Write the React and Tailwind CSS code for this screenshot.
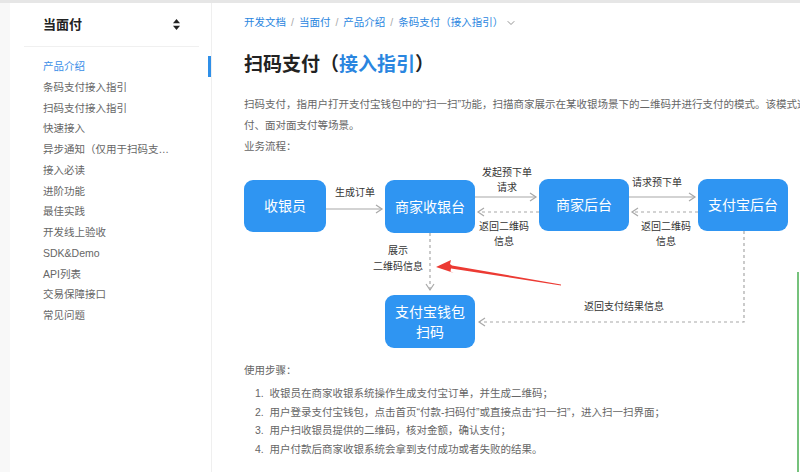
import React from "react";
import { ChevronDown } from "lucide-react";

const FONT = { fontFamily: '"Liberation Sans", "Noto Sans CJK SC", sans-serif' };

const navItems = [
  "产品介绍",
  "条码支付接入指引",
  "扫码支付接入指引",
  "快速接入",
  "异步通知（仅用于扫码支…",
  "接入必读",
  "进阶功能",
  "最佳实践",
  "开发线上验收",
  "SDK&Demo",
  "API列表",
  "交易保障接口",
  "常见问题",
];

function Box({ className, children }) {
  return (
    <div
      className={
        "absolute flex items-center justify-center rounded-[9px] bg-[#2f95f2] text-center text-[14px] leading-[20px] text-white " +
        className
      }
    >
      {children}
    </div>
  );
}

function Label({ className, children }) {
  return (
    <div
      className={
        "absolute -translate-x-1/2 whitespace-nowrap text-center text-[10px] leading-[15px] text-[#333] " +
        className
      }
    >
      {children}
    </div>
  );
}

function Diagram() {
  const gray = "#a8a8a8";
  return (
    <div className="relative h-[190px] w-[555px]">
      <svg className="absolute left-0 top-0" width="560" height="190" viewBox="0 0 560 190">
        <line x1="82" y1="44" x2="138" y2="44" stroke={gray} strokeWidth="1.2" />
        <polyline points="132,40 138,44 132,48" fill="none" stroke={gray} strokeWidth="1.2" />
        <line x1="231" y1="32" x2="292" y2="32" stroke={gray} strokeWidth="1.2" />
        <polyline points="286,28 292,32 286,36" fill="none" stroke={gray} strokeWidth="1.2" />
        <line x1="295" y1="47" x2="234" y2="47" stroke={gray} strokeWidth="1.2" strokeDasharray="3 3" />
        <polyline points="240,43 234,47 240,51" fill="none" stroke={gray} strokeWidth="1.2" />
        <line x1="385" y1="32" x2="451" y2="32" stroke={gray} strokeWidth="1.2" />
        <polyline points="445,28 451,32 445,36" fill="none" stroke={gray} strokeWidth="1.2" />
        <line x1="454" y1="47" x2="388" y2="47" stroke={gray} strokeWidth="1.2" strokeDasharray="3 3" />
        <polyline points="394,43 388,47 394,51" fill="none" stroke={gray} strokeWidth="1.2" />
        <line x1="186" y1="68" x2="186" y2="125" stroke={gray} strokeWidth="1.2" strokeDasharray="3 3" />
        <polyline points="182,119 186,125 190,119" fill="none" stroke={gray} strokeWidth="1.2" />
        <polyline
          points="500,66 500,157 235,157"
          fill="none"
          stroke={gray}
          strokeWidth="1.2"
          strokeDasharray="3 3"
        />
        <polyline points="241,153 235,157 241,161" fill="none" stroke={gray} strokeWidth="1.2" />
        <polygon points="317,120.5 207,103.5 206.5,106.5 210,108 192,102 207,95 206,99 208,100.5 317,119.5" fill="#ec3a33" />
      </svg>

      <Box className="left-0 top-[15px] h-[52px] w-[82px]">收银员</Box>
      <Box className="left-[141px] top-[15px] h-[53px] w-[90px]">商家收银台</Box>
      <Box className="left-[295px] top-[14px] h-[52px] w-[90px]">商家后台</Box>
      <Box className="left-[454px] top-[14px] h-[52px] w-[90px]">支付宝后台</Box>
      <Box className="left-[141px] top-[130px] h-[53px] w-[90px]">
        <span>
          支付宝钱包
          <br />
          扫码
        </span>
      </Box>

      <Label className="left-[111px] top-[20px]">生成订单</Label>
      <Label className="left-[263px] top-[0px]">
        发起预下单
        <br />
        请求
      </Label>
      <Label className="left-[260px] top-[54px]">
        返回二维码
        <br />
        信息
      </Label>
      <Label className="left-[413px] top-[10px]">请求预下单</Label>
      <Label className="left-[422px] top-[54px]">
        返回二维码
        <br />
        信息
      </Label>
      <Label className="left-[154px] top-[78px] leading-[16px]">
        展示
        <br />
        二维码信息
      </Label>
      <Label className="left-[380px] top-[134px]">返回支付结果信息</Label>
    </div>
  );
}

export default function App() {
  return (
    <div className="relative flex h-[472px] w-[800px] flex-col overflow-hidden bg-white" style={FONT}>
      <div className="h-[3px] w-full shrink-0 bg-[#e6e6e6]" />
      <div className="flex min-h-0 flex-1">
        <div className="w-[10px] shrink-0 bg-[#f8f8f8]" />
        <div className="relative w-[202px] shrink-0 border-r border-[#efefef]">
          <div className="flex h-[43px] items-center justify-between pl-[33px] pr-[31px]">
            <span className="text-[13px] font-bold text-[#222]">当面付</span>
            <svg width="7" height="11" viewBox="0 0 7 11">
              <polygon points="3.5,0 7,4.2 0,4.2" fill="#222" />
              <polygon points="0,6.8 7,6.8 3.5,11" fill="#222" />
            </svg>
          </div>
          <div className="ml-[14px] mr-[12px] h-px bg-[#f0f0f0]" />
          <ul className="pl-[33px] pt-[9px]">
            {navItems.map((t, i) => (
              <li
                key={t}
                className={
                  "h-[20.75px] whitespace-nowrap text-[10.5px] leading-[20.75px] " +
                  (i === 0 ? "text-[#3a8ee8]" : "text-[#666]")
                }
              >
                {t}
              </li>
            ))}
          </ul>
          <div className="absolute right-0 top-[53px] h-[21px] w-[3px] bg-[#2f8fe8]" />
        </div>

        <div className="min-w-0 flex-1 pl-[32px]">
          <div className="flex h-[38px] items-center pt-[1px] text-[10.5px] text-[#2a86e0]">
            <span>开发文档</span>
            <span className="mx-[5px] text-[#aaa]">/</span>
            <span>当面付</span>
            <span className="mx-[5px] text-[#aaa]">/</span>
            <span>产品介绍</span>
            <span className="mx-[5px] text-[#aaa]">/</span>
            <span>条码支付（接入指引）</span>
            <ChevronDown className="ml-[2px] h-[12px] w-[12px] text-[#777]" strokeWidth={1.6} />
          </div>
          <h1 className="mt-[9px] h-[30px] whitespace-nowrap text-[19px] font-bold leading-[30px] text-[#222]">
            扫码支付（<span className="text-[#2a86e0]">接入指引</span>）
          </h1>
          <p className="mt-[14px] whitespace-nowrap text-[10.5px] leading-[21px] text-[#666]">
            扫码支付，指用户打开支付宝钱包中的“扫一扫”功能，扫描商家展示在某收银场景下的二维码并进行支付的模式。该模式适用于线下实体店支
            <br />
            付、面对面支付等场景。
          </p>
          <p className="text-[10.5px] leading-[21px] text-[#666]">业务流程：</p>
          <div className="mt-[8px]">
            <Diagram />
          </div>
          <p className="mt-[5px] text-[10.5px] leading-[20px] text-[#666]">使用步骤：</p>
          <ol className="mt-[4px] pl-[11px] text-[10.5px] leading-[18.7px] text-[#666]">
            <li className="whitespace-nowrap">1.&nbsp; 收银员在商家收银系统操作生成支付宝订单，并生成二维码；</li>
            <li className="whitespace-nowrap">2.&nbsp; 用户登录支付宝钱包，点击首页“付款-扫码付”或直接点击“扫一扫”，进入扫一扫界面；</li>
            <li className="whitespace-nowrap">3.&nbsp; 用户扫收银员提供的二维码，核对金额，确认支付；</li>
            <li className="whitespace-nowrap">4.&nbsp; 用户付款后商家收银系统会拿到支付成功或者失败的结果。</li>
          </ol>
        </div>
      </div>
      <div className="absolute bottom-0 right-[1px] top-[272px] w-[2px] bg-[#76c27c]" />
    </div>
  );
}
